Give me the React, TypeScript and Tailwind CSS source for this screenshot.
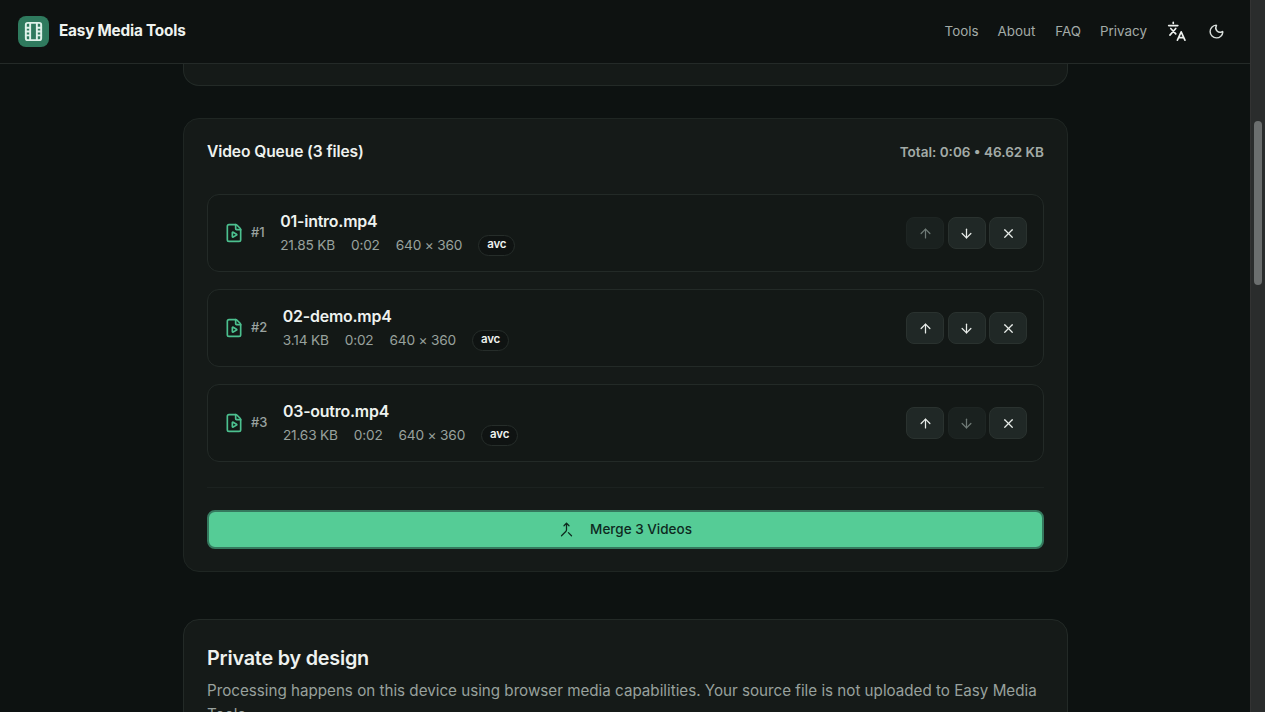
import { ArrowDown, ArrowUp, FilePlay, Merge, Moon, X } from "lucide-react";

const files = [
  { name: "01-intro.mp4", size: "21.85 KB", num: "#1", upOff: true, downOff: false },
  { name: "02-demo.mp4", size: "3.14 KB", num: "#2", upOff: false, downOff: false },
  { name: "03-outro.mp4", size: "21.63 KB", num: "#3", upOff: false, downOff: true },
];

const IconButton = ({ children, off }: { children: React.ReactNode; off?: boolean }) => (
  <button
    className={`w-[38px] h-[32px] rounded-lg border flex items-center justify-center ${
      off ? "bg-[#1a211f] border-[#1e2523] text-[#6f7a76]" : "bg-[#202826] border-[#2a322f] text-[#e8ece9]"
    }`}
  >
    {children}
  </button>
);

export default function App() {
  return (
    <div className="h-[712px] overflow-hidden flex bg-[#0d1211] font-['Inter',sans-serif]">
      <div className="flex-1 flex flex-col min-w-0">
        {/* Header */}
        <header className="h-[64px] shrink-0 border-b border-[#242a28] bg-[#0e1211] flex items-center justify-between pl-[18px] pr-[25px]">
          <div className="flex items-center gap-[10px]">
            <div className="w-[31px] h-[31px] rounded-lg bg-[#2f7a5e] flex items-center justify-center">
              <svg viewBox="0 0 24 24" fill="none" stroke="#dff2ea" strokeWidth="2" strokeLinecap="round" className="w-[23px] h-[23px]">
                <rect x="4" y="3" width="16" height="18" rx="2" />
                <path d="M8.5 3v18M15.5 3v18M4 8h4.5M4 12h4.5M4 16h4.5M15.5 8H20M15.5 12H20M15.5 16H20" />
              </svg>
            </div>
            <span className="text-[15.3px] font-bold text-[#eef2ef] tracking-[-0.2px]">Easy Media Tools</span>
          </div>
          <nav className="flex items-center text-[13.4px] text-[#a3aba7]">
            <a className="mr-[19px]">Tools</a>
            <a className="mr-[20px]">About</a>
            <a className="mr-[19px]">FAQ</a>
            <a className="mr-[20px]">Privacy</a>
            <svg viewBox="0 0 24 24" fill="none" stroke="#eef1ef" strokeWidth="2" strokeLinecap="round" strokeLinejoin="round" className="w-[20px] h-[20px] mr-[21px]">
              <path d="M7.5 1.5v1.5M2 5.5h11M4.5 9l6 6.5M10.5 9l-7 8" />
              <path d="M12.5 23l4.5-10 4.5 10M14.2 20h5.6" />
            </svg>
            <Moon className="w-[17px] h-[17px] text-[#d8dedb]" strokeWidth={2} />
          </nav>
        </header>

        <main className="flex-1 flex flex-col items-center min-h-0 pl-[1px]">
          {/* previous card, scrolled off */}
          <div className="w-[885px] h-[22px] shrink-0 border border-t-0 border-[#232a27] rounded-b-2xl bg-[#151a18]" />

          {/* Queue */}
          <section className="w-[885px] h-[454px] shrink-0 mt-[32px] border border-[#1f2623] rounded-2xl bg-[#151a18] px-[23px] pt-[23px]">
            <div className="flex items-center justify-between h-[20px]">
              <h2 className="text-[15.6px] font-semibold text-[#eef2ef] tracking-[-0.1px]">Video Queue (3 files)</h2>
              <span className="text-[13.5px] font-semibold text-[#a3aba7]">Total: 0:06 • 46.62 KB</span>
            </div>

            <div className="mt-[32px] flex flex-col gap-[17px]">
              {files.map((f) => (
                <div
                  key={f.name}
                  className="h-[78px] border border-[#232a27] rounded-xl bg-[#131816] flex items-center pl-[16px] pr-[16px]"
                >
                  <FilePlay className="w-[20px] h-[20px] text-[#4cc08f] shrink-0" strokeWidth={2} />
                  <span className="ml-[7px] text-[13px] text-[#9aa3a0] font-medium">{f.num}</span>
                  <div className="ml-[15.5px] flex-1 min-w-0 pt-[2px]">
                    <div className="text-[15.9px] font-semibold text-[#eef2ef] leading-[20px] tracking-[-0.2px]">{f.name}</div>
                    <div className="flex items-center h-[22px] mt-[2px] text-[13.7px] text-[#98a19d] tracking-[-0.2px]">
                      <span>{f.size}</span>
                      <span className="ml-[16px]">0:02</span>
                      <span className="ml-[16px]">640 × 360</span>
                      <span className="ml-[16px] h-[21px] px-[8px] rounded-full border border-[#262d2a] bg-[#0f1312] text-[11.5px] font-semibold text-[#eef2ef] flex items-center">
                        avc
                      </span>
                    </div>
                  </div>
                  <div className="flex items-center gap-[3.5px]">
                    <IconButton off={f.upOff}>
                      <ArrowUp className="w-[15px] h-[15px]" />
                    </IconButton>
                    <IconButton off={f.downOff}>
                      <ArrowDown className="w-[15px] h-[15px]" />
                    </IconButton>
                    <IconButton>
                      <X className="w-[15px] h-[15px]" />
                    </IconButton>
                  </div>
                </div>
              ))}
            </div>

            <div className="mt-[25px] h-px bg-[#1c2220]" />

            <button className="mt-[22px] w-full h-[39px] rounded-lg border-2 border-[#35795e] bg-[#55cc96] flex items-center justify-center gap-[16px] text-[13.5px] font-medium text-[#0e2a1f]">
              <Merge className="w-[15px] h-[15px]" strokeWidth={2} />
              Merge 3 Videos
            </button>
          </section>

          {/* Private by design */}
          <section className="w-[885px] shrink-0 mt-[47px] border border-[#232a27] rounded-2xl bg-[#151a18] px-[23px] pt-[24px] pb-6">
            <h2 className="text-[19.8px] font-semibold text-[#eef2ef] leading-[28px] tracking-[-0.2px]">Private by design</h2>
            <p className="mt-[7px] text-[15.18px] leading-[24px] text-[#98a19d]">
              Processing happens on this device using browser media capabilities. Your source file is not uploaded to Easy Media Tools.
            </p>
          </section>
        </main>
      </div>

      {/* Scrollbar */}
      <div className="w-[15px] shrink-0 bg-[#2a2c2c] border-l border-[#333] pt-[121px] pl-[3px]">
        <div className="w-[8px] h-[164px] rounded-full bg-[#6b6e6e]" />
      </div>
    </div>
  );
}
